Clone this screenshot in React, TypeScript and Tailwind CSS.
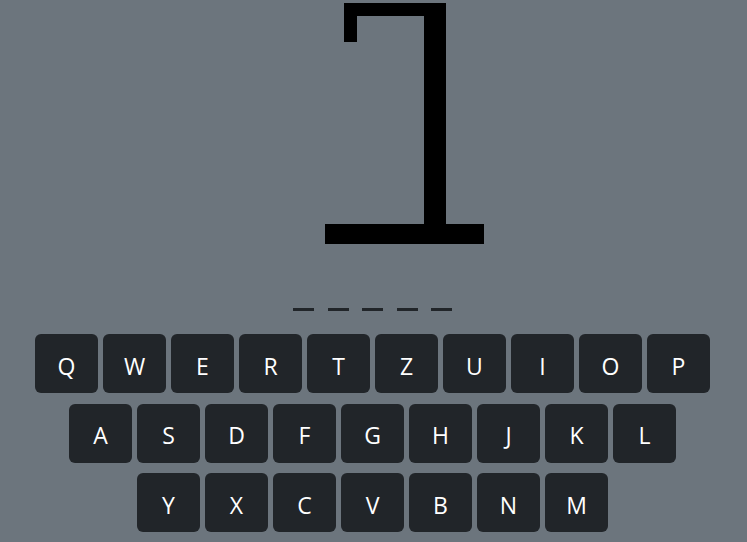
import React from "react";

const rows = [
  ["Q", "W", "E", "R", "T", "Z", "U", "I", "O", "P"],
  ["A", "S", "D", "F", "G", "H", "J", "K", "L"],
  ["Y", "X", "C", "V", "B", "N", "M"],
];

export default function App() {
  return (
    <div
      className="w-full min-h-[542px] bg-[#6c757d] flex flex-col items-center pr-[2px]"
      style={{ fontFamily: '"Open Sans", "Noto Sans", sans-serif' }}
    >
      <svg width="401" height="250" viewBox="0 0 401 250" className="block">
        <rect x="172" y="3" width="102" height="13" fill="#000" />
        <rect x="172" y="3" width="13" height="39" fill="#000" />
        <rect x="252" y="3" width="22" height="221" fill="#000" />
        <rect x="153" y="224" width="159" height="20" fill="#000" />
      </svg>
      <div className="mt-[58px] flex gap-[13.5px]">
        {[0, 1, 2, 3, 4].map((i) => (
          <div key={i} className="w-[21px] h-[3px] bg-[#212529]" />
        ))}
      </div>
      <div className="mt-[23px] flex flex-col items-center gap-[10.5px]">
        {rows.map((row, ri) => (
          <div key={ri} className="flex gap-[5px]">
            {row.map((k) => (
              <button
                key={k}
                className="w-[63px] h-[59px] pt-[5px] rounded-md bg-[#212529] text-white text-[23px] leading-none flex items-center justify-center"
              >
                {k}
              </button>
            ))}
          </div>
        ))}
      </div>
    </div>
  );
}
